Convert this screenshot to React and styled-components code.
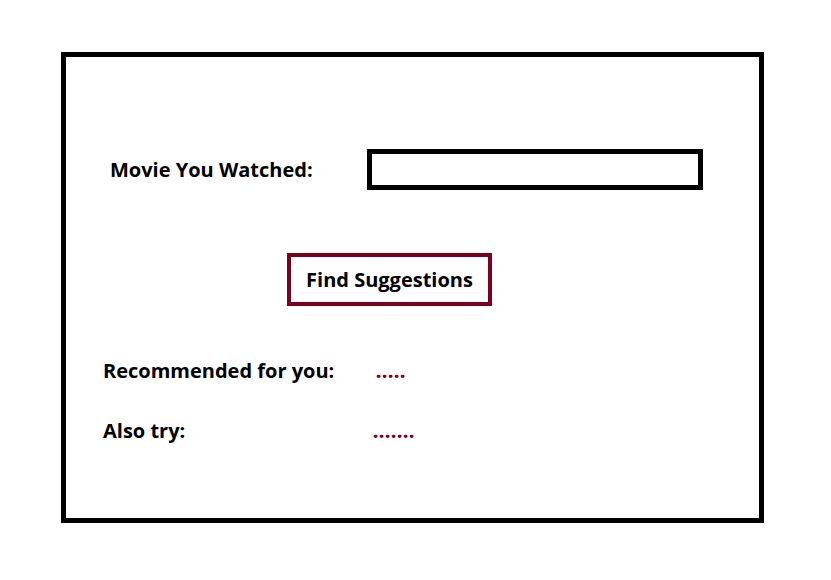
import React from "react";
import styled, { createGlobalStyle } from "styled-components";

const Global = createGlobalStyle`
  html, body { margin: 0; padding: 0; background: #fff; }
  body { font-family: "Open Sans", Lato, sans-serif; color: #000; }
`;

const Page = styled.div`
  width: 831px;
  height: 580px;
  padding: 52px 0 0 61px;
  box-sizing: border-box;
`;

const Card = styled.div`
  width: 703px;
  height: 471px;
  box-sizing: border-box;
  border: 5px solid #000;
  padding: 92px 0 0 0;
  display: flex;
  flex-direction: column;
`;

const InputRow = styled.div`
  display: flex;
  align-items: center;
  padding-left: 44px;
`;

const Label = styled.span`
  font-weight: 700;
  font-size: 20px;
  width: ${(p) => p.$w}px;
  flex-shrink: 0;
`;

const Field = styled.div`
  width: 336px;
  height: 41px;
  box-sizing: border-box;
  border: 5px solid #000;
`;

const ButtonRow = styled.div`
  padding: 63px 0 0 221px;
`;

const Button = styled.div`
  width: 205px;
  height: 53px;
  box-sizing: border-box;
  border: 4px solid #7d0021;
  display: flex;
  align-items: center;
  justify-content: center;
  font-weight: 700;
  font-size: 20px;
`;

const Results = styled.div`
  padding: 52px 0 0 37px;
  display: flex;
  flex-direction: column;
  gap: 36px;
`;

const ResultRow = styled.div`
  display: flex;
  align-items: center;
  height: 24px;
`;

const Dots = styled.span`
  color: #7d0021;
  font-weight: 800;
  font-size: 18px;
  letter-spacing: 0.8px;
  position: relative;
  top: 1px;
`;

export default function App() {
  return (
    <>
      <Global />
      <Page>
        <Card>
          <InputRow>
            <Label $w={257}>Movie You Watched:</Label>
            <Field />
          </InputRow>
          <ButtonRow>
            <Button>Find Suggestions</Button>
          </ButtonRow>
          <Results>
            <ResultRow>
              <Label $w={273}>Recommended for you:</Label>
              <Dots>.....</Dots>
            </ResultRow>
            <ResultRow>
              <Label $w={270}>Also try:</Label>
              <Dots>.......</Dots>
            </ResultRow>
          </Results>
        </Card>
      </Page>
    </>
  );
}
